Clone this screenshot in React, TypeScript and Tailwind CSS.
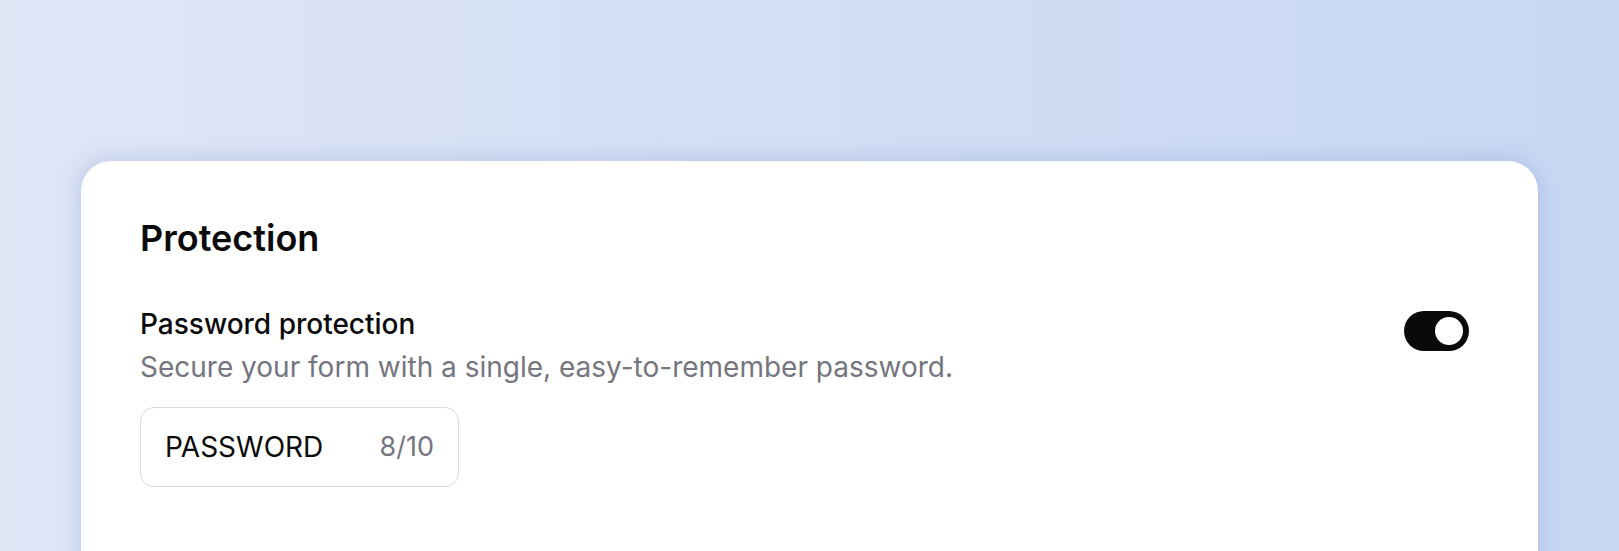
import React from 'react';

const App: React.FC = () => {
  return (
    <div
      className="h-[551px] w-full overflow-hidden bg-linear-to-r from-[#dfe6f6] to-[#c7d7f3] px-[81px] pt-[161px]"
      style={{ fontFamily: 'Inter, "Noto Sans", sans-serif' }}
    >
      {/* Card */}
      <div className="h-[480px] rounded-[30px] bg-white pl-[59px] pr-[69px] pt-[55px] shadow-[0_0_22px_rgba(110,135,200,0.35)]">
        <h2 className="text-[36px] font-semibold leading-[44px] text-[#0a0a0a]">Protection</h2>

        <div className="mt-[46px] flex items-start justify-between">
          <div>
            <h3 className="text-[28px] font-medium leading-[36px] text-[#0a0a0a]">Password protection</h3>
            <p className="mt-[7px] text-[28px] leading-[36px] text-[#75757f]">
              Secure your form with a single, easy-to-remember password.
            </p>

            {/* Password field */}
            <div className="mt-[22px] flex h-[80px] w-[319px] items-center justify-between rounded-[14px] border-[1.5px] border-[#d9d9de] pl-[24px] pr-[24px]">
              <span className="text-[28px] text-[#0a0a0a]">PASSWORD</span>
              <span className="text-[27px] text-[#75757f]">8/10</span>
            </div>
          </div>

          {/* Toggle */}
          <button className="mt-[5px] flex h-[40px] w-[65px] items-center justify-end rounded-full bg-[#0a0a0a] px-[6px]">
            <span className="h-[28px] w-[28px] rounded-full bg-white" />
          </button>
        </div>
      </div>
    </div>
  );
};

export default App;
